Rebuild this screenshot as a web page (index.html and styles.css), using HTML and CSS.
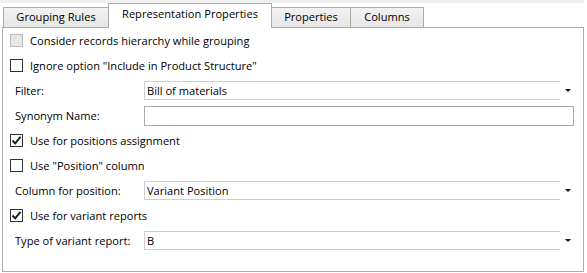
FILE: index.html
```html
<!DOCTYPE html>
<html>
	<head>
		<meta charset="utf-8" />
		<title>Representation Properties</title>
		<link rel="stylesheet" href="styles.css">
	</head>
	<body>
		<div class="strip"></div>
		<div class="tabs">
			<div class="tab tab-grouping">Grouping Rules</div>
			<div class="tab tab-repr on">Representation Properties</div>
			<div class="tab tab-props">Properties</div>
			<div class="tab tab-cols">Columns</div>
		</div>
		<div class="panel">
			<div class="row">
				<span class="check disabled"></span>
				<span class="text">Consider records hierarchy while grouping</span>
			</div>
			<div class="row">
				<span class="check"></span>
				<span class="text">Ignore option "Include in Product Structure"</span>
			</div>
			<div class="row field">
				<span class="label">Filter:</span>
				<div class="combo"><span class="value">Bill of materials</span></div>
				<span class="arrow"></span>
			</div>
			<div class="row field">
				<span class="label">Synonym Name:</span>
				<div class="edit"></div>
			</div>
			<div class="row">
				<span class="check">
					<svg width="11" height="11" viewBox="0 0 11 11"><path d="M1.5 5.5 L4.2 8.4 L9.5 1.8" fill="none" stroke="#1a1a1a" stroke-width="1.9"/></svg>
				</span>
				<span class="text">Use for positions assignment</span>
			</div>
			<div class="row">
				<span class="check"></span>
				<span class="text">Use "Position" column</span>
			</div>
			<div class="row field">
				<span class="label">Column for position:</span>
				<div class="combo"><span class="value">Variant Position</span></div>
				<span class="arrow"></span>
			</div>
			<div class="row">
				<span class="check">
					<svg width="11" height="11" viewBox="0 0 11 11"><path d="M1.5 5.5 L4.2 8.4 L9.5 1.8" fill="none" stroke="#1a1a1a" stroke-width="1.9"/></svg>
				</span>
				<span class="text">Use for variant reports</span>
			</div>
			<div class="row field">
				<span class="label">Type of variant report:</span>
				<div class="combo"><span class="value">B</span></div>
				<span class="arrow"></span>
			</div>
		</div>
	</body>
</html>
```

FILE: styles.css
```css
*{
	margin:0;
	padding:0;
	box-sizing:border-box;
}
body{
	background:#fff;
	width:587px;
	height:273px;
	overflow:hidden;
	font-family:"Open Sans","Noto Sans","Liberation Sans",sans-serif;
	font-size:11.1px;
	color:#000;
}
.strip{
	width:584px;
	height:3px;
	background:#f0f0f0;
}
.tabs{
	display:flex;
	align-items:flex-end;
	height:24px;
	margin-left:3px;
	position:relative;
	z-index:2;
}
.tab{
	height:20px;
	border:1px solid #acacac;
	border-bottom:none;
	border-right:none;
	background:linear-gradient(#f2f2f2,#e6e6e6);
	display:flex;
	align-items:center;
	justify-content:center;
	padding-bottom:3px;
}
.tab-grouping{ width:105px; }
.tab-repr{ width:164px; }
.tab-props{ width:78px; }
.tab-cols{ width:74px; border-right:1px solid #acacac; }
.tab.on{
	height:25px;
	margin-bottom:-1px;
	background:#fff;
	border-right:1px solid #acacac;
	padding-bottom:5px;
}
.tab.on + .tab{
	border-left:none;
}
.panel{
	width:582px;
	height:245px;
	margin-left:2px;
	border:1px solid #acacac;
}
.row{
	height:25px;
	display:flex;
	align-items:center;
	padding-left:7px;
}
.row.field{
	padding-left:12px;
}
.check{
	width:13px;
	height:13px;
	border:1px solid #333;
	background:#fff;
	margin-right:7px;
	display:flex;
	align-items:center;
	justify-content:center;
}
.check.disabled{
	border-color:#bcbcbc;
	background:#e6e6e6;
}
.label{
	width:129px;
}
.combo{
	width:416px;
	height:19px;
	border:1px solid #cfcfcf;
	border-right:none;
	display:flex;
	align-items:center;
	padding-left:2px;
	padding-bottom:1px;
}
.arrow{
	width:0;
	height:0;
	margin-left:5px;
	border-left:3px solid transparent;
	border-right:3px solid transparent;
	border-top:3px solid #111;
}
.edit{
	width:430px;
	height:20px;
	border:1px solid #ababab;
}
```
